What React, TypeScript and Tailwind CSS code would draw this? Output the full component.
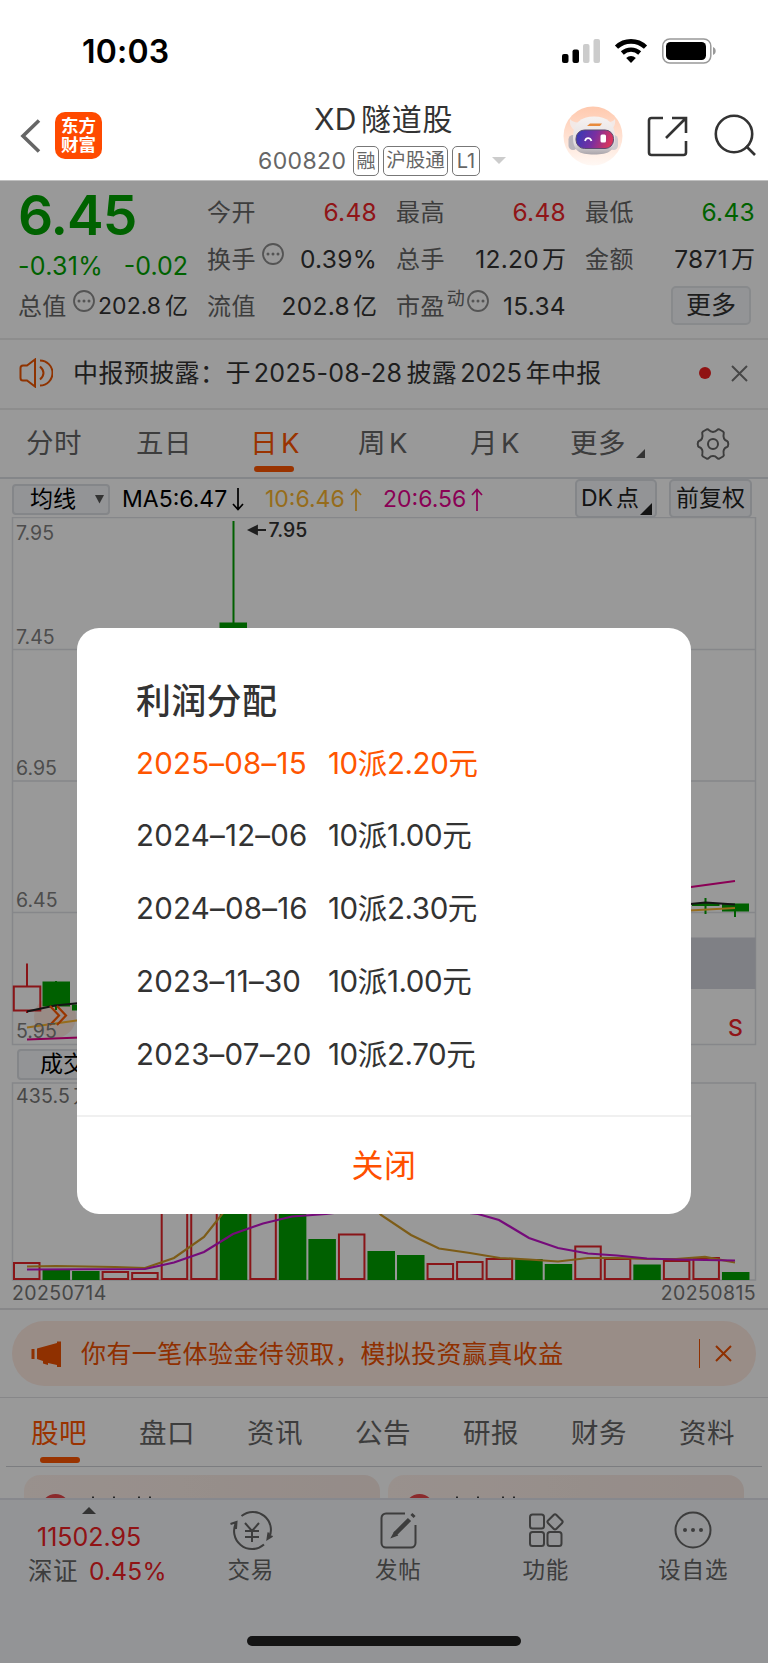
import { clsx } from "clsx";

const periodTabs = [
  { label: "分时", suffix: "", width: "w-[110px]" },
  { label: "五日", suffix: "", width: "w-[109px]" },
  { label: "日", suffix: "K", width: "w-[113px]", active: true },
  { label: "周", suffix: "K", width: "w-[112px]" },
  { label: "月", suffix: "K", width: "w-[100px]" },
];

const infoTabs = ["股吧", "盘口", "资讯", "公告", "研报", "财务", "资料"];

const dividends = [
  { date: "2025–08–15", plan: "10派2.20元", active: true },
  { date: "2024–12–06", plan: "10派1.00元" },
  { date: "2024–08–16", plan: "10派2.30元" },
  { date: "2023–11–30", plan: "10派1.00元" },
  { date: "2023–07–20", plan: "10派2.70元" },
];

// up = hollow red bar, otherwise solid green
const volumes = [
  { top: 1262, up: true },
  { top: 1269, up: false },
  { top: 1271, up: false },
  { top: 1271, up: true },
  { top: 1272, up: true },
  { top: 1150, up: true },
  { top: 1120, up: true },
  { top: 1100, up: false },
  { top: 1160, up: true },
  { top: 1200, up: false },
  { top: 1239, up: false },
  { top: 1233.5, up: true },
  { top: 1251, up: false },
  { top: 1255, up: false },
  { top: 1263, up: true },
  { top: 1261, up: true },
  { top: 1258, up: true },
  { top: 1259, up: false },
  { top: 1264, up: false },
  { top: 1245.5, up: true },
  { top: 1258, up: true },
  { top: 1264.5, up: false },
  { top: 1260, up: true },
  { top: 1257, up: true },
  { top: 1272, up: false },
];

function StatusBar() {
  return (
    <div className="flex h-[100px] items-start justify-between pl-[82px] pr-[51px] pt-[36px]">
      <span className="text-[32px] font-semibold leading-8 tracking-[0.2px] text-black">10:03</span>
      <svg className="mt-[2px]" width="156" height="26" viewBox="561 38 156 26" fill="none">
        <rect x="562" y="54" width="6.5" height="9" rx="2" fill="#000" />
        <rect x="572.5" y="49.5" width="6.5" height="13.5" rx="2" fill="#000" />
        <rect x="583" y="44" width="6.5" height="19" rx="2" fill="#ccc" />
        <rect x="593.5" y="39" width="6.5" height="24" rx="2" fill="#ccc" />
        <path d="M616.5 47.2a21 21 0 0 1 29 0" stroke="#000" strokeWidth="4.6" />
        <path d="M622.3 53a13 13 0 0 1 17.4 0" stroke="#000" strokeWidth="4.4" />
        <path d="M631 63l-4.8-5a7 7 0 0 1 9.6 0z" fill="#000" />
        <rect x="662.8" y="39" width="48" height="24" rx="7" stroke="#999" strokeWidth="1.5" />
        <rect x="666" y="42" width="40" height="18" rx="4.5" fill="#000" />
        <path d="M713 47v8c3.6-1.2 3.6-6.8 0-8z" fill="#999" />
      </svg>
    </div>
  );
}

function Robot() {
  return (
    <svg width="60" height="60" viewBox="0 0 60 60">
      <defs>
        <linearGradient id="halo" x1="0" y1="0" x2="0" y2="1">
          <stop offset="0" stopColor="#ffc9ae" />
          <stop offset="1" stopColor="#fff8f4" />
        </linearGradient>
        <linearGradient id="visor" x1="0" y1="0" x2="1" y2="0.2">
          <stop offset="0" stopColor="#2f3ab8" />
          <stop offset="0.55" stopColor="#7a2fa0" />
          <stop offset="1" stopColor="#d8355e" />
        </linearGradient>
        <linearGradient id="helmet" x1="0" y1="0" x2="0" y2="1">
          <stop offset="0" stopColor="#f6f2f1" />
          <stop offset="0.7" stopColor="#e4dfe0" />
          <stop offset="1" stopColor="#a9a4aa" />
        </linearGradient>
      </defs>
      <circle cx="30" cy="30" r="29.5" fill="url(#halo)" />
      <path d="M7 13c-1 6 2 10 6 12l6-9c-5 1-10 0-12-3zM52 13c1 6-2 10-6 12l-6-9c5 1 10 0 12-3z" fill="#f3e9e6" />
      <rect x="5.500" y="29" width="9" height="15" rx="4.500" fill="#b9b5bb" />
      <rect x="46" y="29" width="9" height="15" rx="4.500" fill="#cfcace" />
      <path d="M10 31C10 17 18 10.500 31 10.500S52 17 52 31S46 48.500 31 48.500S10 45 10 31z" fill="url(#helmet)" />
      <rect x="13" y="24" width="37.500" height="18.500" rx="8.500" fill="url(#visor)" stroke="#5b4c70" />
      <path d="M24 20l3-2.500h12l-2 2.500z" fill="#e88a3c" />
      <path d="M22 35c1.200-3.800 5-3.800 6.500 0" stroke="#fff" strokeWidth="1.800" fill="none" />
      <rect x="37.500" y="28.500" width="5.500" height="8" rx="1.500" fill="#fff" />
    </svg>
  );
}

function Header() {
  return (
    <header className="flex h-[81px] border-b border-[#c0c0c0] bg-white">
      <div className="flex w-[240px] items-start pl-[20px] pt-[12px]">
        <svg className="mt-[7px]" width="21" height="34" viewBox="0 0 21 34" fill="none" stroke="#666" strokeWidth="3.600">
          <path d="M19 1.500L3 17l16 15.500" />
        </svg>
        <div className="ml-[14px] flex h-[47px] w-[47px] flex-col items-center justify-center rounded-[10px] bg-[#ff4a00] text-[17.5px] font-bold leading-[18.5px] text-white">
          <span>东方</span>
          <span>财富</span>
        </div>
      </div>
      <div className="flex w-[320px] flex-col">
        <div className="mt-[3px] flex h-[32px] items-center pl-[74px] text-[30px] leading-8 text-[#333]">
          <span className="w-[40px] tracking-[0.2px]">XD</span>
          <span className="ml-[7px] tracking-[0.8px]">隧道股</span>
        </div>
        <div className="mt-[11px] flex h-[30px] items-center pl-[18px] text-[#666]">
          <span className="w-[95px] text-[23px] tracking-[0.4px]">600820</span>
          <span className="flex h-[30px] w-[26px] items-center justify-center rounded-[5px] border border-[#777] text-[19px]">融</span>
          <span className="ml-[4px] flex h-[30px] w-[65px] items-center justify-center rounded-[5px] border border-[#777] text-[19.5px]">沪股通</span>
          <span className="ml-[4px] flex h-[30px] w-[28px] items-center justify-center rounded-[5px] border border-[#777] text-[20px]">L1</span>
          <svg className="ml-[12px]" width="14" height="8" viewBox="0 0 14 8" fill="#ccc">
            <path d="M0 0h14L7 7z" />
          </svg>
        </div>
      </div>
      <div className="flex flex-1 items-start pl-[3px] pt-[6px]">
        <Robot />
        <svg className="ml-[24px] mt-[10px]" width="42" height="42" viewBox="0 0 42 42" fill="none" stroke="#333" strokeWidth="2.600">
          <path d="M16 2H4.500A2.500 2.500 0 0 0 2 4.500v32A2.500 2.500 0 0 0 4.500 39h32a2.500 2.500 0 0 0 2.500-2.500V25M25 2h14v15M39 2L19 22" />
        </svg>
        <svg className="ml-[25px] mt-[8px]" width="42" height="44" viewBox="0 0 42 44" fill="none" stroke="#333" strokeWidth="2.600">
          <circle cx="20" cy="20" r="18.200" />
          <path d="M32 32l9 9" />
        </svg>
      </div>
    </header>
  );
}

function MoreDots() {
  return (
    <svg width="22" height="22" viewBox="0 0 22 22" fill="none" stroke="#8c8c8c" strokeWidth="1.800">
      <circle cx="11" cy="11" r="10" />
      <g fill="#8c8c8c" stroke="none">
        <circle cx="6" cy="11" r="1.500" />
        <circle cx="11" cy="11" r="1.500" />
        <circle cx="16" cy="11" r="1.500" />
      </g>
    </svg>
  );
}

interface QuoteProps {
  label: string;
  value: string;
  unit?: string;
  tone?: string;
  children?: React.ReactNode;
}

function Quote({ label, value, unit, tone = "text-[#333]", children }: QuoteProps) {
  return (
    <div className="flex h-[47px] items-center">
      <span className="text-[24px] tracking-[0.4px] text-[#666]">{label}</span>
      {children}
      <span className={clsx("ml-auto flex items-center text-[24.5px] tracking-[0.3px]", tone)}>
        {value}
        {unit && <span className="ml-[3px] text-[24px] tracking-normal">{unit}</span>}
      </span>
    </div>
  );
}

function QuotePanel() {
  return (
    <section className="flex h-[159px] gap-[19px] border-b-2 border-[#ececec] pl-[18px] pr-[13px] pt-[8px]">
      <div className="w-[170px]">
        <div className="flex h-[53px] items-center text-[55px] font-semibold leading-none tracking-[-1px] text-[#00a400]">6.45</div>
        <div className="flex h-[41px] items-center justify-between pt-[8px] text-[25px] text-[#00a400]">
          <span className="tracking-[0.3px]">-0.31%</span>
          <span>-0.02</span>
        </div>
        <div className="flex h-[47px] items-center">
          <span className="text-[24px] tracking-[0.3px] text-[#666]">总值</span>
          <span className="-mt-[12px] ml-[6px]">
            <MoreDots />
          </span>
          <span className="ml-auto flex items-center text-[23px] text-[#333]">
            202.8<span className="ml-[4px]">亿</span>
          </span>
        </div>
      </div>
      <div className="w-[170px]">
        <Quote label="今开" value="6.48" tone="text-[#f02428]" />
        <Quote label="换手" value="0.39%">
          <span className="-mt-[12px] ml-[6px]">
            <MoreDots />
          </span>
        </Quote>
        <Quote label="流值" value="202.8" unit="亿" />
      </div>
      <div className="w-[170px]">
        <Quote label="最高" value="6.48" tone="text-[#f02428]" />
        <Quote label="总手" value="12.20" unit="万" />
        <Quote label="市盈" value="15.34">
          <span className="-mt-[16px] ml-[2px] text-[18px] text-[#666]">动</span>
          <span className="-mt-[12px] ml-[2px]">
            <MoreDots />
          </span>
        </Quote>
      </div>
      <div className="w-[170px]">
        <Quote label="最低" value="6.43" tone="text-[#00a400]" />
        <Quote label="金额" value="7871" unit="万" />
        <div className="flex h-[47px] items-center justify-end pb-[2px] pr-[4px]">
          <button className="flex h-[39px] w-[80px] items-center justify-center rounded-[5px] border-2 border-[#e3e6ea] bg-[#f5f7fa] text-[25px] text-[#333]">更多</button>
        </div>
      </div>
    </section>
  );
}

function Notice() {
  return (
    <section className="flex h-[70px] items-center border-b-2 border-[#ececec] pb-[2px] pl-[19px] text-[25px] text-[#333]">
      <svg width="34" height="30" viewBox="0 0 34 30" fill="none" stroke="#ee5500" strokeWidth="2">
        <path d="M1.500 10q0-2.500 2.500-2.500h4L16 1.500v27l-8-6H4Q1.500 22.500 1.500 20zM21 8.500q7 6.500 0 13M21 2.500a12.500 12.500 0 0 1 0 25" />
      </svg>
      <span className="ml-[20px] tracking-[0.4px]">中报预披露：于</span>
      <span className="ml-[3px] tracking-[0.3px]">2025-08-28</span>
      <span className="ml-[4px] tracking-[0.4px]">披露</span>
      <span className="ml-[3px]">2025</span>
      <span className="ml-[4px] tracking-[0.3px]">年中报</span>
      <span className="ml-auto h-[12px] w-[12px] rounded-full bg-[#f02020]" />
      <svg className="ml-[20px] mr-[20px]" width="17" height="17" viewBox="0 0 17 17" stroke="#777" strokeWidth="2">
        <path d="M1 1l15 15M16 1L1 16" />
      </svg>
    </section>
  );
}

function PeriodTabs() {
  return (
    <nav className="flex h-[69px] items-center border-b-2 border-[#dcdfe4] pl-[26px] text-[27.5px] text-[#666]">
      {periodTabs.map((tab) => (
        <div key={tab.label} className={clsx("relative flex shrink-0 items-center tracking-[0.5px]", tab.width, tab.active && "pl-[5px] text-[#ff5500]")}>
          <span>{tab.label}</span>
          {tab.suffix && <span className="ml-[3px] text-[27.500px]">{tab.suffix}</span>}
          {tab.active && <span className="absolute -bottom-[15px] left-[9px] h-[6px] w-[40px] rounded-full bg-[#ff5500]" />}
        </div>
      ))}
      <div className="flex w-[141px] items-center">
        <span className="tracking-[0.5px]">更多</span>
        <svg className="ml-[10px] mt-[20px]" width="9" height="9" viewBox="0 0 9 9" fill="#555">
          <path d="M9 0v9H0z" />
        </svg>
      </div>
      <svg className="-ml-[15px]" width="34" height="34" viewBox="0 0 34 34" fill="none" stroke="#666" strokeWidth="2">
        <path
          d="M10.500 2.500Q12 2 13 3.200Q14.500 5 17 5T21 3.200Q22 2 23.500 2.500L27 4.500Q28.200 5.500 27.700 7Q27 9.500 28 11.500T31 14Q32.200 14.500 32.300 17Q32.200 19.500 31 20Q29 20.500 28 22.500T27.700 27Q28.200 28.500 27 29.500L23.500 31.500Q22 32 21 30.800Q19.500 29 17 29T13 30.800Q12 32 10.500 31.500L7 29.500Q5.800 28.500 6.300 27Q7 24.500 6 22.500T3 20Q1.800 19.500 1.700 17Q1.800 14.500 3 14Q5 13.500 6 11.500T6.300 7Q5.800 5.500 7 4.500z"
          strokeLinejoin="round"
        />
        <circle cx="17" cy="17" r="5" />
      </svg>
    </nav>
  );
}

function Averages() {
  return (
    <div className="flex h-[38px] items-center pl-[12px] text-[23px] text-[#222]">
      <div className="mt-[2px] flex h-[31px] w-[98px] items-center rounded-[4px] border-2 border-[#dcdfe4] bg-[#f5f7fa] pl-[16px] text-black">
        <span>均线</span>
        <svg className="ml-[19px]" width="9" height="9" viewBox="0 0 9 9" fill="#555">
          <path d="M0 0h9L4.500 8.500z" />
        </svg>
      </div>
      <div className="ml-[12px] mt-[2px] flex w-[143px] items-center text-black">
        <span>MA5:6.47</span>
        <Arrow className="ml-[5px] rotate-180" />
      </div>
      <div className="mt-[2px] flex w-[118px] items-center text-[#fab52e]">
        <span>10:6.46</span>
        <Arrow className="ml-[5px]" />
      </div>
      <div className="mt-[2px] flex items-center text-[#e6008e]">
        <span>20:6.56</span>
        <Arrow className="ml-[5px]" />
      </div>
      <div className="relative ml-auto flex h-[39px] w-[82px] items-center rounded-[5px] border-2 border-[#dcdfe4] bg-[#f5f7fa] pl-[4px]">
        <span>DK</span>
        <span className="ml-[3px]">点</span>
        <svg className="absolute bottom-[1px] right-[3px]" width="12" height="12" viewBox="0 0 12 12" fill="#222">
          <path d="M12 0v12H0z" />
        </svg>
      </div>
      <div className="ml-[12px] mr-[16px] flex h-[39px] w-[83px] items-center justify-center rounded-[5px] border-2 border-[#dcdfe4] bg-[#f5f7fa]">前复权</div>
    </div>
  );
}

function Arrow({ className }: { className?: string }) {
  return (
    <svg className={className} width="12" height="23" viewBox="0 0 12 23" fill="none" stroke="currentColor" strokeWidth="1.700">
      <path d="M6 23V2M1 7l5-5.500L11 7" />
    </svg>
  );
}

function PriceChart() {
  return (
    <svg className="block" width="768" height="529" viewBox="0 517 768 529">
      <circle cx="55" cy="1017" r="21" fill="#ffeae0" />
      <g stroke="#dfe1e6" strokeWidth="1.500" fill="none">
        <rect x="12.500" y="517.500" width="743" height="527" />
        <path d="M12.500 649.500h743M12.500 781h743M12.500 912.500h743" />
      </g>
      <rect x="600" y="937.500" width="155.500" height="51.500" fill="#d4d5de" />

      <g stroke="#00a000" strokeWidth="2" fill="#00a000">
        <path d="M233.500 521v102M56 981v29M705.500 898v16M735 905v12" />
        <g stroke="none">
          <rect x="219.500" y="622.500" width="27.500" height="20" />
          <rect x="42.500" y="981.500" width="27.500" height="25" />
          <rect x="72" y="1004.500" width="27.500" height="6" />
          <rect x="692" y="903" width="27.500" height="3" />
          <rect x="722" y="903.500" width="27" height="8" />
        </g>
      </g>
      <g stroke="#e42328" strokeWidth="2" fill="none">
        <rect x="13.800" y="986.500" width="26.500" height="24" />
        <path d="M27 963.500v23M27 1010v3" />
      </g>
      <g fill="none" strokeWidth="2.200">
        <path d="M27 1011.500L55 1005.500L80 1003M680 905l25.500-2.500L735 904.500" stroke="#222" />
        <path d="M27 1027.500L80 1020M680 911l55-3" stroke="#fab52e" />
        <path d="M27 1039.500L80 1037.500M680 888.500L735 881" stroke="#e6008e" />
        <path d="M50 1006l9 9.500l-9 9.500M57 1006l9 9.500l-9 9.500" stroke="#ff5a00" />
      </g>

      <g className="text-[19.500px]" fill="#808080">
        <text x="16" y="539.500">7.95</text>
        <text x="16" y="643.500">7.45</text>
        <text x="16" y="774.500">6.95</text>
        <text x="16" y="906.500">6.45</text>
        <text x="16" y="1037.500">5.95</text>
      </g>
      <path d="M250 530h16M257 526l-8 4l8 4z" stroke="#333" strokeWidth="1.800" fill="#333" />
      <text x="268.500" y="537" className="text-[19.500px] font-medium" fill="#333">7.95</text>
      <text x="728" y="1035.500" className="text-[23px] font-medium" fill="#f02428">S</text>
    </svg>
  );
}

function VolumeChart() {
  return (
    <svg className="block" width="768" height="199" viewBox="0 1082 768 199">
      <rect x="12.500" y="1083" width="743" height="197" fill="none" stroke="#dfe1e6" strokeWidth="1.500" />
      {volumes.map((bar, i) => {
        const x = 13 + i * 29.54;
        return bar.up ? (
          <rect key={i} x={x + 1} y={bar.top + 1} width="25.500" height={1278 - bar.top} fill="none" stroke="#e42328" strokeWidth="2" />
        ) : (
          <rect key={i} x={x} y={bar.top} width="27.500" height={1280 - bar.top} fill="#00a000" />
        );
      })}
      <path
        d="M27 1266.500L56 1266L86 1266.500L115 1267L145 1268L174 1258L204 1237L223 1213L270 1180H350L381 1215L411 1235L439 1248.500L470 1253L500 1258L529 1259.500L558 1261.500L588 1258L617 1258L647 1259L676 1259L705 1256.800L735 1262.500"
        fill="none"
        stroke="#d09a28"
        strokeWidth="2.200"
      />
      <path
        d="M27 1269.500L145 1269L174 1262.500L204 1252L233 1234L263 1223.500L292 1216.500L326 1214L400 1205L478 1214L499 1220L529 1238L558 1248L588 1253.500L617 1255.500L647 1258.500L676 1259.500L735 1260.500"
        fill="none"
        stroke="#c413cc"
        strokeWidth="2.200"
      />
      <text x="16" y="1102.500" className="text-[19.500px] tracking-[0.200px]" fill="#777">
        435.5<tspan dx="3">万</tspan>
      </text>
    </svg>
  );
}

function Promo() {
  return (
    <section className="border-b border-t-2 border-[#e2e2e5] py-[11px]">
      <div className="mx-[12px] flex h-[65px] items-center rounded-full bg-[#ffebe2] pl-[19px] pr-[24px] text-[25px] text-[#ee5000]">
        <svg width="31" height="28" viewBox="0 0 31 28" fill="currentColor">
          <path d="M0.500 9h3v10h-3zM6 8.500L26 3V1.500h4V27h-4v-2l-9-2v2l-5-1.500v-2.500L6 19z" />
        </svg>
        <span className="ml-[19px] pt-px tracking-[0.4px]">你有一笔体验金待领取，模拟投资赢真收益</span>
        <span className="ml-auto h-[29px] w-px bg-[#ee5000]" />
        <svg className="ml-[15px]" width="17" height="17" viewBox="0 0 17 17" stroke="currentColor" strokeWidth="2">
          <path d="M1 1l15 15M16 1L1 16" />
        </svg>
      </div>
    </section>
  );
}

function InfoTabs() {
  return (
    <nav className="mx-[6px] flex h-[69px] items-center border-b border-[#cfd0d6] pl-[25px] pt-[4px] text-[27.5px] tracking-[0.6px] text-[#666]">
      {infoTabs.map((tab, i) => (
        <div key={tab} className={clsx("relative w-[108px] shrink-0", i === 0 && "text-[#ff5500]")}>
          {tab}
          {i === 0 && <span className="absolute -bottom-[15px] left-[9px] h-[6px] w-[40px] rounded-full bg-[#ff5500]" />}
        </div>
      ))}
    </nav>
  );
}

function FeedCards() {
  return (
    <div className="flex h-[31px] gap-[8px] overflow-hidden px-[24px] pt-[8px]">
      {[0, 1].map((card) => (
        <div key={card} className="h-[80px] w-[356px] rounded-[16px] bg-gradient-to-r from-[#fff2ec] to-[#f8e9e3] pl-[17px] pt-[19px]">
          <svg width="140" height="29" viewBox="0 0 140 29">
            <circle cx="14.500" cy="14.500" r="14.500" fill="#e8464a" />
            <path d="M51 2.500h2v3h-2zM72 2.500h2v3h-2zM97 2.500h2v3h-2zM108 2.500h2v3h-2z" fill="#444" />
          </svg>
        </div>
      ))}
    </div>
  );
}

function BottomBar() {
  return (
    <footer className="flex flex-1 flex-col border-t-2 border-[#e2e3ec] bg-[#f5f7fa] text-[#666]">
      <div className="flex">
        <div className="w-[177px] pl-[28px] pt-[7px] text-[#f02024]">
          <svg className="ml-[54px]" width="14" height="7" viewBox="0 0 14 7" fill="#555">
            <path d="M7 0l7 7H0z" />
          </svg>
          <div className="mt-[10px] flex h-[26px] items-center pl-[9px] text-[25px]">11502.95</div>
          <div className="mt-[7px] flex h-[28px] items-center text-[24.500px]">
            <span className="w-[61px] tracking-[0.4px] text-[#666]">深证</span>
            <span className="tracking-[0.2px]">0.45%</span>
          </div>
        </div>
        <BottomItem label="交易">
          <path d="M10.500 6a18 18 0 0 1 27.500 22M33 34.500A18 18 0 0 1 5.500 12M-0.500 14l6-2l-0.500 7M41.500 26l-5 3l1-6.500M14 13l7 8l7-8M14 21h14M14 27h14M21 21v11" />
        </BottomItem>
        <BottomItem label="发帖">
          <path d="M27 3.500H8A4.500 4.500 0 0 0 3.500 8v25A4.500 4.500 0 0 0 8 37.500h25a4.500 4.500 0 0 0 4.500-4.500V15" />
          <path d="M17 24L31.500 9.500M34 6.500L36 4.500" strokeWidth="4.500" />
          <path d="M14.500 26.500l4-1.500l-2-2z" />
        </BottomItem>
        <BottomItem label="功能">
          <rect x="4" y="4.500" width="14" height="14" rx="2.500" />
          <rect x="4" y="22" width="14" height="14" rx="2.500" />
          <rect x="21.500" y="22" width="14" height="14" rx="2.500" />
          <rect x="23.200" y="6" width="11.800" height="11.800" rx="2" transform="rotate(45 29.100 11.800)" />
        </BottomItem>
        <BottomItem label="设自选">
          <circle cx="20" cy="20" r="17.500" />
          <g fill="#666" stroke="none">
            <circle cx="12" cy="20" r="2" />
            <circle cx="20" cy="20" r="2" />
            <circle cx="28" cy="20" r="2" />
          </g>
        </BottomItem>
      </div>
      <div className="mx-auto mb-[17px] mt-auto h-[10px] w-[274px] rounded-full bg-[#222]" />
    </footer>
  );
}

function BottomItem({ label, children }: { label: string; children: React.ReactNode }) {
  return (
    <div className="flex w-[147.500px] flex-col items-center pt-[10px]">
      <svg className="overflow-visible" width="40" height="40" viewBox="0 0 40 40" fill="none" stroke="#666" strokeWidth="2">
        {children}
      </svg>
      <span className="mt-[7px] flex h-[26px] items-center text-[22.500px] tracking-[0.800px]">{label}</span>
    </div>
  );
}

function DividendDialog() {
  return (
    <div className="absolute left-[77px] top-[628px] flex h-[586px] w-[614px] flex-col rounded-[22px] bg-white text-[#333]">
      <h2 className="mt-[54px] flex h-[38px] items-center pl-[59px] text-[35px] font-medium tracking-[0.3px]">利润分配</h2>
      <ul className="mt-[7px] pl-[59px]">
        {dividends.map((row) => (
          <li key={row.date} className={clsx("flex h-[72.800px] items-center text-[29.500px]", row.active && "text-[#ff5500]")}>
            <span className="w-[192px] tracking-[0.2px]">{row.date}</span>
            <span className="tracking-[-0.4px]">{row.plan}</span>
          </li>
        ))}
      </ul>
      <button className="mt-auto flex h-[99px] items-center justify-center border-t-2 border-[#f0f0f0] text-[32px] tracking-[0.6px] text-[#ff5000]">关闭</button>
    </div>
  );
}

export default function App() {
  return (
    <div className="relative flex h-[1663px] w-[768px] flex-col overflow-hidden whitespace-nowrap bg-white font-['Inter','Noto_Sans_CJK_SC',sans-serif] leading-none">
      <StatusBar />
      <Header />
      <QuotePanel />
      <Notice />
      <PeriodTabs />
      <Averages />
      <PriceChart />
      <div className="flex h-[36px] items-start pl-[17px] pt-[3px]">
        <div className="flex h-[31px] w-[98px] items-center rounded-[4px] border-2 border-[#dcdfe4] bg-[#f5f7fa] pl-[21px] text-[23px] text-black">成交量</div>
      </div>
      <VolumeChart />
      <div className="flex h-[27px] items-center justify-between px-[12px] pb-px text-[19.500px] tracking-[0.400px] text-[#777]">
        <span>20250714</span>
        <span>20250815</span>
      </div>
      <Promo />
      <InfoTabs />
      <FeedCards />
      <BottomBar />

      {/* Dimmed page below the header */}
      <div className="absolute inset-x-0 bottom-0 top-[181px] bg-black/40" />
      <DividendDialog />
    </div>
  );
}
